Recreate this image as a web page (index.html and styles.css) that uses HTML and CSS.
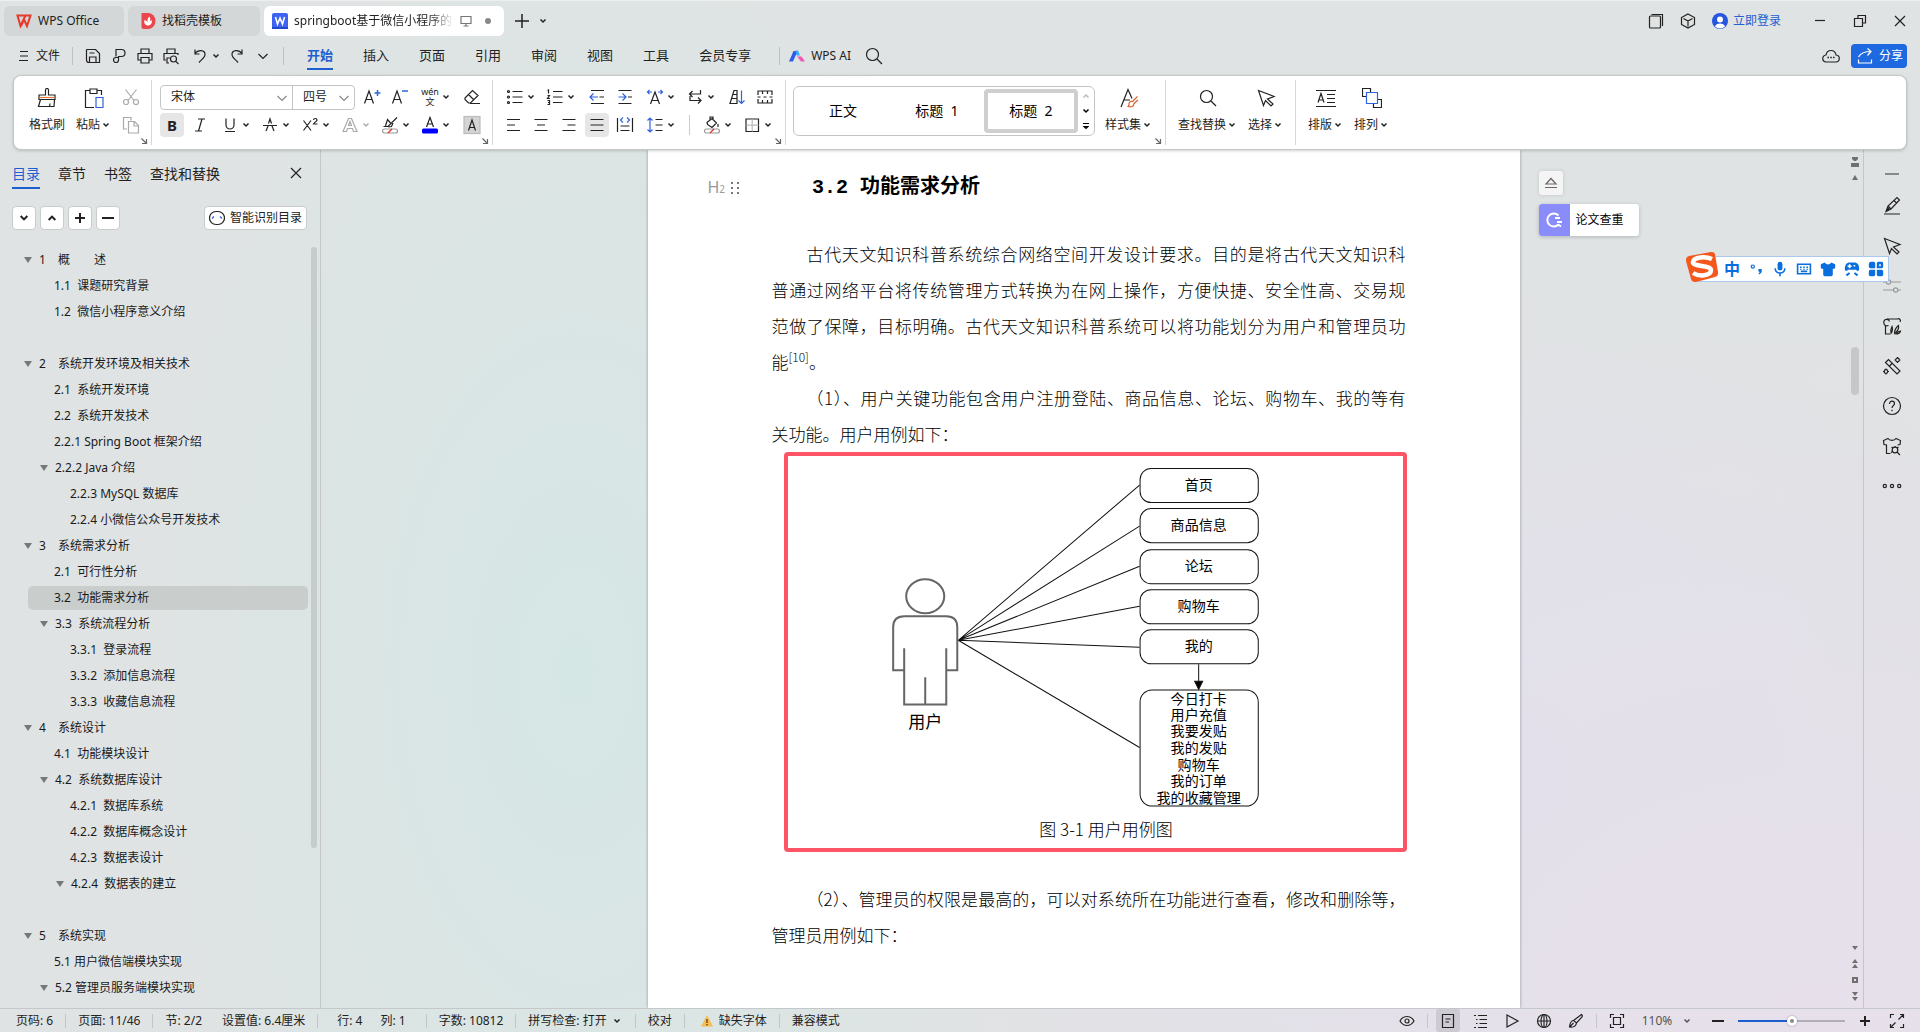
FILE: index.html
```html
<!DOCTYPE html>
<html lang="zh-CN">
<head>
<meta charset="utf-8">
<title>WPS Office</title>
<link rel="stylesheet" href="styles.css">
</head>
<body>
<svg class="sprite" aria-hidden="true">
  <symbol id="chev" viewBox="0 0 12 12"><path d="M3.500 4.500 6 7l2.500-2.500" stroke-width="1.500"/></symbol>
  <symbol id="chev-thin" viewBox="0 0 12 12"><path d="M1.500 4 6 8.500 10.500 4"/></symbol>
  <symbol id="launch" viewBox="0 0 8 8"><path d="M1.500 1.500l5 5M6.500 2v4.500H2"/></symbol>
  <symbol id="close" viewBox="0 0 20 20"><path d="M5 5l10 10M15 5 5 15"/></symbol>
  <symbol id="plus" viewBox="0 0 20 20"><path d="M10 3v14M3 10h14" stroke-width="1.500"/></symbol>
  <symbol id="plus-b" viewBox="0 0 20 20"><path d="M10 5v10M5 10h10" stroke-width="2"/></symbol>
  <symbol id="minus-b" viewBox="0 0 20 20"><path d="M4 10h12" stroke-width="2"/></symbol>
  <symbol id="search" viewBox="0 0 20 20"><circle cx="8.500" cy="8.500" r="6"/><path d="M13 13l5 5"/></symbol>
  <symbol id="cursor" viewBox="0 0 20 20"><path d="M2.500 2.500l15.500 6-6.500 2.500 5.500 5-2 2-5.500-5.500-2 5z"/></symbol>
  <symbol id="save" viewBox="0 0 20 20"><path d="M4 3.500h8.500l4 4v9H6a2.500 2.500 0 0 1-2.500-2.500V4zM6.500 16.500V11H13v5.500M6.500 7h5"/></symbol>
  <symbol id="export" viewBox="0 0 20 20"><path d="M7 10.500V3.500h5.500a3.500 3.500 0 0 1 0 7H9.500v3.500a2.500 2.500 0 1 1-2.500-2.500h3"/></symbol>
  <symbol id="print" viewBox="0 0 20 20"><path d="M6 7V3h8v4M6 14H3V7.500h14V14h-3M6 11.500h8V17H6z"/></symbol>
  <symbol id="preview" viewBox="0 0 20 20"><path d="M6 7V3h8v4M5 14H3V7.500h14V9M8 17H6v-5h3"/><circle cx="12.500" cy="13" r="3"/><path d="M14.800 15.300l2.700 2.700"/></symbol>
  <symbol id="undo" viewBox="0 0 20 20"><path d="M5 3.500V8h4.500M5 7.500c3-4 10-4 10 1 0 3-3.500 5-6 8"/></symbol>
  <symbol id="redo" viewBox="0 0 20 20"><path d="M15 3.500V8h-4.500M15 7.500c-3-4-10-4-10 1 0 3 3.500 5 6 8"/></symbol>
  <symbol id="brush" viewBox="0 0 20 20"><path d="M8.500 7V2a1.500 1.500 0 0 1 3 0v5H18v4.500H2V7zM3.500 11.500 1.500 18.500h15.500l.5-7M12.500 18.500l.5-3"/><path d="M2.500 9.500h15" stroke="#e07a3a"/></symbol>
  <symbol id="paste" viewBox="0 0 20 20"><path d="M6 2.500H1.500v17H10M13 2.500h4.500V7M6 1h7v4.500H6z"/><path d="M12 9.500h7v10h-7z" stroke="#2f63dd"/></symbol>
  <symbol id="cut" viewBox="0 0 20 20"><path d="M4.500 2.500l8.500 11M15.500 2.500 7 13.500"/><circle cx="5" cy="15" r="2.500"/><circle cx="15" cy="15" r="2.500"/></symbol>
  <symbol id="copy" viewBox="0 0 20 20"><path d="M6 14H2.500V2.500h7.500v3M7.500 6.500h6l4 4v7.500h-10zM13 7v4h4"/></symbol>
  <symbol id="a-up" viewBox="0 0 20 20"><path d="M2.500 16.500 7 4l4.500 12.500M4 12.500h6"/><path d="M12.500 6h6M15.500 3v6" stroke="#2f63dd" stroke-width="1.500"/></symbol>
  <symbol id="a-down" viewBox="0 0 20 20"><path d="M2.500 16.500 7 4l4.500 12.500M4 12.500h6"/><path d="M12 4h6" stroke="#2f63dd" stroke-width="1.500"/></symbol>
  <symbol id="eraser" viewBox="0 0 20 20"><path d="M3 11 10.500 3.500l5.500 5-7.500 7.500H6.500L3 12.500zM6.500 7.500l5.500 5.500M8 16.500h10"/></symbol>
  <symbol id="italic" viewBox="0 0 20 20"><path d="M8 4h7M5 16h7M12 4 8.500 16"/></symbol>
  <symbol id="under" viewBox="0 0 20 20"><path d="M6 3.500V10a4 4 0 0 0 8 0V3.500M5 16.500h10"/></symbol>
  <symbol id="strike" viewBox="0 0 20 20"><path d="M6 16 8 11M14 16l-2-5M8.500 8.500 10 4l1.500 4.500M3 10.500h14"/></symbol>
  <symbol id="super" viewBox="0 0 20 20"><path d="M3.500 5.500l7.500 10M11 5.500l-7.500 10M13.500 5c.3-2 3.500-2 3.500 0 0 1.500-2.500 2-3.500 4H17.500"/></symbol>
  <symbol id="a-out" viewBox="0 0 20 20"><path d="M3 16.500 8.500 3.500h3L17 16.500h-3.500l-1-3h-5l-1 3zM8.500 10.500h3L10 6.500z"/></symbol>
  <symbol id="hilite" viewBox="0 0 20 20"><path d="M3.500 11.500h4.500L17 2.500M5.500 11l2-6.500 3 3.500M8.500 12l3-.5L13 8"/><rect x="2.500" y="14" width="15" height="4" rx="2" stroke="#999"/><path d="M8 18l4-4" stroke="#d33"/></symbol>
  <symbol id="a-color" viewBox="0 0 20 20"><path d="M6.500 12 10 2.500 13.500 12M7.500 9h5"/><rect x="2" y="13.500" width="16" height="5" rx="1.500" fill="#00f" stroke="none"/></symbol>
  <symbol id="a-box" viewBox="0 0 20 20"><rect x="2" y="1.500" width="16" height="17" fill="#d4d4d4" stroke="#bbb"/><path d="M6.500 15.500 10 5l3.500 10.500M7.500 12.500h5"/></symbol>
  <symbol id="bullets" viewBox="0 0 20 20"><path d="M7.500 4.500h10M7.500 10h10M7.500 15.500h10"/><circle cx="3.500" cy="4.500" r="1"/><circle cx="3.500" cy="10" r="1"/><circle cx="3.500" cy="15.500" r="1"/></symbol>
  <symbol id="numbers" viewBox="0 0 20 20"><path d="M8 4.500h9.500M8 10h9.500M8 15.500h9.500M2.500 3.500l1-.5v3.500M2.500 8.500h2l-2 3h2.500M2.500 13.500h2v4h-2M3 15.500h1.500"/></symbol>
  <symbol id="outdent" viewBox="0 0 20 20"><path d="M4 3.500h13M12.500 10H17M4 16.500h13"/><path d="M11 10H3.500M6.500 6.500 3 10l3.500 3.500" stroke="#2f63dd"/></symbol>
  <symbol id="indent" viewBox="0 0 20 20"><path d="M3.500 3.500h13M13 10h4M3.500 16.500h13"/><path d="M3.500 10H11M7.500 6.500 11 10l-3.500 3.500" stroke="#2f63dd"/></symbol>
  <symbol id="a-wide" viewBox="0 0 20 20"><path d="M5.500 17 10 5l4.500 12M7 13.500h6"/><path d="M2.500 5H7M4.500 3l-2 2 2 2M13 5h4.500M15.500 3l2 2-2 2" stroke="#2f63dd"/></symbol>
  <symbol id="flow" viewBox="0 0 20 20"><path d="M15.500 3v4H4.500M7.500 4l-3 3 3 3M5 9v4.500h11M13 10.500l3 3-3 3"/></symbol>
  <symbol id="sort" viewBox="0 0 20 20"><path d="M3 16.500 7 3.500h3v13zM4.500 11.500H10M5.500 7.500H10"/><path d="M14.500 3.500v13M11.500 13.500l3 3 3-3" stroke="#2f63dd"/></symbol>
  <symbol id="frames" viewBox="0 0 20 20"><path d="M3 8V4h14v4M3 12v4h14v-4M7.500 4v3M12.500 4v3M7.500 13v3M12.500 13v3M2.500 10h3M8.500 10h3M14.500 10h3"/></symbol>
  <symbol id="al" viewBox="0 0 20 20"><path d="M4 4.500h13M4 10h8M4 15.500h13"/></symbol>
  <symbol id="ac" viewBox="0 0 20 20"><path d="M3.500 4.500h13M6 10h8M3.500 15.500h13"/></symbol>
  <symbol id="ar" viewBox="0 0 20 20"><path d="M3.500 4.500h13M8.500 10h8M3.500 15.500h13"/></symbol>
  <symbol id="aj" viewBox="0 0 20 20"><path d="M3.500 4.500h13M3.500 10h13M3.500 15.500h13"/></symbol>
  <symbol id="ad" viewBox="0 0 20 20"><path d="M2.500 3v14M17.500 3v14M5.500 11h9M5.500 15.500h9"/><path d="M8 2.500 5.500 5 8 7.500M12 2.500 14.500 5 12 7.500" stroke="#2f63dd"/></symbol>
  <symbol id="spacing" viewBox="0 0 20 20"><path d="M10.500 4.500h7M10.500 10h7M10.500 15.500h7"/><path d="M5 3v14M2.500 5.500 5 3l2.500 2.500M2.500 14.500 5 17l2.500-2.500" stroke="#2f63dd"/></symbol>
  <symbol id="bucket" viewBox="0 0 20 20"><path d="M5 7.500 10 3.500l4.500 4.500-4.500 4.500-4.500-3zM8 5V2h3v3M16 9v3"/><rect x="2.500" y="14" width="15" height="4" rx="2" stroke="#999"/><path d="M8 18l4-4" stroke="#d33"/></symbol>
  <symbol id="borders" viewBox="0 0 20 20"><path d="M4 4h12.500v12.500H4z"/><path d="M10.200 4.500v12M4.500 10.200h12" stroke="#bbb"/></symbol>
  <symbol id="styles" viewBox="0 0 20 20"><path d="M2 19 9 1.500l4 9M5 12h6"/><path d="M18.500 8.500l-5 5M19 12l-4.500 4M13.500 13.500c-2.500-.5-4 1-3.500 3.500l-1 1.500c3 1 6 0 6-3" stroke="#d8622b"/></symbol>
  <symbol id="typeset" viewBox="0 0 20 20"><path d="M0 2.500h20M0 18.500h20M2 14.500 5 5.500l3 9M3 12h4M11 6.500h8M11 10.500h8M11 14.500h8"/></symbol>
  <symbol id="arrange" viewBox="0 0 20 20"><path d="M5 8.500H.5v-8h8V4M11.500 15v4.500h8v-8H16"/><path d="M4.500 4.500h11v11h-11z" stroke="#2f63dd" fill="#fff"/></symbol>
  <symbol id="windows" viewBox="0 0 20 20"><rect x="3.500" y="5" width="11" height="12" rx="1"/><path d="M5.500 3.500h11v11.500"/></symbol>
  <symbol id="cube" viewBox="0 0 20 20"><path d="M10 3l6.500 3.500v7L10 17l-6.500-3.500v-7zM5.500 7.500 10 10l4.500-2.500M10 10v5.500"/></symbol>
  <symbol id="restore" viewBox="0 0 20 20"><path d="M4.500 7.500h8v8h-8zM8 7V4.500h7.500V12H13"/></symbol>
  <symbol id="cloud" viewBox="0 0 20 20"><path d="M5.500 16a3.500 3.500 0 0 1-.5-7c1-6 9-6 10 0a3.500 3.500 0 0 1-.5 7z"/><path d="M6.500 11.500H8M9.300 11.500h1.500M12 11.500h1.500" stroke-width="1.700"/></symbol>
  <symbol id="share" viewBox="0 0 20 20"><path d="M3.500 11c2-4 6-5.500 12.500-5.500M12.500 2.500 16 5.500l-3.500 4M3.500 13.500V17h13v-3.500"/></symbol>
  <symbol id="eye" viewBox="0 0 20 20"><path d="M3 10c3.500-6 10.500-6 14 0-3.500 6-10.500 6-14 0z"/><circle cx="10" cy="10" r="2"/></symbol>
  <symbol id="doc" viewBox="0 0 20 20"><path d="M4.500 3.500h11v13h-11zM7.500 8h5M7.500 11h3.500"/></symbol>
  <symbol id="outline" viewBox="0 0 20 20"><path d="M4 4.500h2M8 4.500h9M6 8.500h1.500M9.500 8.500H17M6 12.500h1.500M9.500 12.500H17M4 16.500h2M8 16.500h9"/></symbol>
  <symbol id="play" viewBox="0 0 20 20"><path d="M5 4l11 6-11 6z"/></symbol>
  <symbol id="globe" viewBox="0 0 20 20"><circle cx="10" cy="10" r="6.500"/><ellipse cx="10" cy="10" rx="3" ry="6.500"/><path d="M3.500 10h13M10 3.500v13"/></symbol>
  <symbol id="pen" viewBox="0 0 20 20"><path d="M15.500 3.500c1 .7 1 1.500.5 2.500l-5.500 6-3-2.500zM7 9.500c-2 .5-3 2-3.500 6.500 4 .5 6.500-1 7-4M3.500 16l4-4"/></symbol>
  <symbol id="focus" viewBox="0 0 20 20"><path d="M3.500 7V3.500H7M13 3.500h3.500V7M16.500 13v3.500H13M7 16.500H3.500V13M6.500 6.500h7v7h-7z"/></symbol>
  <symbol id="expand" viewBox="0 0 20 20"><path d="M3.500 7V3.500H7M16.500 13v3.500H13M7 16.500H3.500V13M13 3.500h3.500V7M11.500 8.500l4.500-4.500M8.500 11.500 4 16"/></symbol>
  <symbol id="edit" viewBox="0 0 20 20"><path d="M4 15.500 6 10l9-8.500 2.500 2.500L9 13zM6 10l3 3M12 4.500 14.500 7M4 15.500l4-4.500M2 18h16"/></symbol>
  <symbol id="sliders" viewBox="0 0 20 20"><path d="M1 6h4M8.500 6H19M1 14h10.500M16 14h3"/><circle cx="6.500" cy="6" r="2.200"/><circle cx="13.700" cy="14" r="2.200"/></symbol>
  <symbol id="gallery" viewBox="0 0 20 20"><path d="M5 3h10.500a2 2 0 0 1 2.500 3M3.500 9V18H8M6.500 9.500C3 11 1 8 2 5c1-2.500 5-2 5.500.5"/><path d="M9 17.500c-1-3 0-5 1-7 1 3 .5 5-1 7zM12.500 17.500c0-4 1.500-6 4-8 .5 3-1 6-4 8zM14 18c1.500-2 3-3 4.500-3-.5 2-1.500 3-4.500 3z"/></symbol>
  <symbol id="wand" viewBox="0 0 20 20"><path d="M3.500 6.500l3-3L18 15l-3 3zM7.500 10l2.500-2.500"/><circle cx="15.500" cy="4" r="1.800"/><circle cx="4" cy="15.500" r="1.800"/><path d="M15.500 1v1.200M15.500 5.800V7M12.500 4h1.200M17.300 4h1.200M4 12.500v1.200M4 17.300v1.200M1 15.500h1.200M5.800 15.500H7"/></symbol>
  <symbol id="help" viewBox="0 0 20 20"><circle cx="10" cy="10" r="8.500"/><path d="M7.500 8c0-4 5-3.500 5-.5 0 2-2.500 2-2.500 4.500M10 13.800v1.500"/></symbol>
  <symbol id="shirt-search" viewBox="0 0 20 20"><path d="M8.500 17.500h-4V9L2 8.500 1.500 4.500 6 2.500c1.500 2.500 6.500 2.500 8 0l4.500 2-.5 4-2.500.5"/><circle cx="13" cy="14" r="2.800"/><path d="M15 16l3 3M13 10v1M9.500 11l1.500 1M9 16.500l1.500-1M16.500 11 15 12"/></symbol>
  <symbol id="dots3" viewBox="0 0 20 20"><circle cx="2.800" cy="10" r="1.600"/><circle cx="10" cy="10" r="1.600"/><circle cx="17.200" cy="10" r="1.600"/></symbol>
  <symbol id="eject" viewBox="0 0 20 20"><path d="M4 14.500h12M5 11l5-5.500L15 11z"/></symbol>
</svg>

<header class="titlebar">
  <button class="tab tab-home"><svg class="i16" viewBox="0 0 16 16"><path d="M1.500 2.500h8L4.500 13z M6.500 2.500h8L11 13 8 6.500 5 13" stroke="#e8392a" stroke-width="2"/></svg>WPS Office</button>
  <button class="tab tab-store"><svg class="i16" viewBox="0 0 16 16"><path d="M1.500 0H8a7.500 8 0 0 1 0 16H3.500a2 2 0 0 1-2-2z" fill="#e9474c" stroke="none"/><path d="M8 12.500C4 12 4 9 4.500 7c1.500.5 2.500 1 3 2.500C7 7 8 4.500 9.500 3.500c1 1.500 1 3.500 0 5 .5-.7 1.500-1 2.500-1C12 10 11 12.500 8 12.500z" fill="#fff" stroke="none"/></svg>找稻壳模板</button>
  <div class="tab tab-doc"><svg class="i16" viewBox="0 0 16 16"><rect width="16" height="16" rx="2" fill="#3c63f2" stroke="none"/><path d="M0 14h16v2H0z" fill="#2348c8" stroke="none"/><path d="M3.500 4l2 7L8 5l2.500 6 2-7" stroke="#fff" stroke-width="1.600"/></svg><span class="doc-name">springboot基于微信小程序的</span><svg class="i12 dim" viewBox="0 0 12 12"><path d="M1 1.500h10v7H1zM3.500 11h5M6 8.500V11"/></svg><span class="unsaved"></span></div>
  <button class="plain" aria-label="新建"><svg class="i20"><use href="#plus"/></svg></button>
  <button class="plain narrow" aria-label="标签列表"><svg class="i12"><use href="#chev"/></svg></button>
  <div class="window-tools">
    <button class="plain" aria-label="窗口"><svg class="i20"><use href="#windows"/></svg></button>
    <button class="plain" aria-label="应用"><svg class="i20"><use href="#cube"/></svg></button>
    <button class="login"><svg class="i16" viewBox="0 0 16 16"><circle cx="8" cy="8" r="8" fill="#2456e0" stroke="none"/><circle cx="8" cy="6.500" r="3" fill="#fff" stroke="none"/><path d="M3 13.500c1-4 9-4 10 0-3 2.500-7 2.500-10 0z" fill="#fff" stroke="none"/></svg>立即登录</button>
    <button class="win" aria-label="最小化"><svg class="i20" viewBox="0 0 20 20"><path d="M5 9.500h10"/></svg></button>
    <button class="win" aria-label="还原"><svg class="i20"><use href="#restore"/></svg></button>
    <button class="win" aria-label="关闭"><svg class="i20"><use href="#close"/></svg></button>
  </div>
</header>

<nav class="menubar">
  <button class="file"><svg class="i12" viewBox="0 0 12 12"><path d="M2 1.500h8M2 6h8M1 10.500h9"/></svg>文件</button>
  <span class="vsep"></span>
  <button class="quick" aria-label="保存"><svg class="i20"><use href="#save"/></svg></button>
  <button class="quick" aria-label="输出"><svg class="i20"><use href="#export"/></svg></button>
  <button class="quick" aria-label="打印"><svg class="i20"><use href="#print"/></svg></button>
  <button class="quick" aria-label="预览"><svg class="i20"><use href="#preview"/></svg></button>
  <button class="tb dd" aria-label="撤销"><svg class="i20"><use href="#undo"/></svg><svg class="i12"><use href="#chev"/></svg></button>
  <button class="quick" aria-label="恢复"><svg class="i20"><use href="#redo"/></svg></button>
  <button class="quick" aria-label="更多"><svg class="i12"><use href="#chev-thin"/></svg></button>
  <span class="vsep"></span>
  <div class="menu-tabs">
    <a href="#" class="on">开始</a><a href="#">插入</a><a href="#">页面</a><a href="#">引用</a><a href="#">审阅</a><a href="#">视图</a><a href="#">工具</a><a href="#">会员专享</a>
  </div>
  <span class="vsep"></span>
  <button class="ai"><svg class="i16" viewBox="0 0 16 16"><path d="M0 13.500 4.500 3h4L4 13.500z" fill="#2f5bea" stroke="none"/><path d="M6.500 2.500h2.500l2 5H7.500z" fill="#35a8ff" stroke="none"/><path d="M8 8.500h4.500L16 13.500h-4z" fill="#f357b5" stroke="none"/></svg>WPS AI</button>
  <button class="quick" aria-label="搜索"><svg class="i20"><use href="#search"/></svg></button>
  <div class="menu-right">
    <button class="plain" aria-label="云"><svg class="i20"><use href="#cloud"/></svg></button>
    <button class="share"><svg class="i20"><use href="#share"/></svg>分享</button>
  </div>
</nav>

<section class="ribbon">
  <div class="group g-clip">
    <button class="big w48"><svg class="i20"><use href="#brush"/></svg><span>格式刷</span></button>
    <button class="big w46"><svg class="i20"><use href="#paste"/></svg><span>粘贴<svg class="i12"><use href="#chev"/></svg></span></button>
    <div class="rows off">
      <button class="tb" aria-label="剪切"><svg class="i20"><use href="#cut"/></svg></button>
      <button class="tb" aria-label="复制"><svg class="i20"><use href="#copy"/></svg></button>
    </div>
    <svg class="launcher"><use href="#launch"/></svg>
  </div>
  <div class="group">
    <div class="rows">
      <div class="row">
        <div class="fontbox">
          <label class="pick pick-font"><select aria-label="字体"><option>宋体</option></select><svg class="i12"><use href="#chev-thin"/></svg></label>
          <label class="pick pick-size"><select aria-label="字号"><option>四号</option></select><svg class="i12"><use href="#chev-thin"/></svg></label>
        </div>
        <button class="tb" aria-label="增大字号"><svg class="i20"><use href="#a-up"/></svg></button>
        <button class="tb" aria-label="减小字号"><svg class="i20"><use href="#a-down"/></svg></button>
        <button class="tb dd"><span class="pinyin"><span>wén</span><span>文</span></span><svg class="i12"><use href="#chev"/></svg></button>
        <button class="tb" aria-label="清除格式"><svg class="i20"><use href="#eraser"/></svg></button>
      </div>
      <div class="row">
        <button class="tb"><b class="bold">B</b></button>
        <button class="tb" aria-label="斜体"><svg class="i20"><use href="#italic"/></svg></button>
        <button class="tb dd" aria-label="下划线"><svg class="i20"><use href="#under"/></svg><svg class="i12"><use href="#chev"/></svg></button>
        <button class="tb dd" aria-label="删除线"><svg class="i20"><use href="#strike"/></svg><svg class="i12"><use href="#chev"/></svg></button>
        <button class="tb dd" aria-label="上标"><svg class="i20"><use href="#super"/></svg><svg class="i12"><use href="#chev"/></svg></button>
        <button class="tb dd faded" aria-label="文字效果"><svg class="i20"><use href="#a-out"/></svg><svg class="i12"><use href="#chev"/></svg></button>
        <button class="tb dd" aria-label="突出显示"><svg class="i20"><use href="#hilite"/></svg><svg class="i12"><use href="#chev"/></svg></button>
        <button class="tb dd" aria-label="字体颜色"><svg class="i20"><use href="#a-color"/></svg><svg class="i12"><use href="#chev"/></svg></button>
        <button class="tb" aria-label="字符底纹"><svg class="i20"><use href="#a-box"/></svg></button>
      </div>
    </div>
    <svg class="launcher"><use href="#launch"/></svg>
  </div>
  <div class="group">
    <div class="rows">
      <div class="row">
        <button class="tb dd" aria-label="项目符号"><svg class="i20"><use href="#bullets"/></svg><svg class="i12"><use href="#chev"/></svg></button>
        <button class="tb dd" aria-label="编号"><svg class="i20"><use href="#numbers"/></svg><svg class="i12"><use href="#chev"/></svg></button>
        <button class="tb" aria-label="减少缩进"><svg class="i20"><use href="#outdent"/></svg></button>
        <button class="tb" aria-label="增加缩进"><svg class="i20"><use href="#indent"/></svg></button>
        <button class="tb dd" aria-label="字符缩放"><svg class="i20"><use href="#a-wide"/></svg><svg class="i12"><use href="#chev"/></svg></button>
        <button class="tb dd" aria-label="文字方向"><svg class="i20"><use href="#flow"/></svg><svg class="i12"><use href="#chev"/></svg></button>
        <button class="tb" aria-label="排序"><svg class="i20"><use href="#sort"/></svg></button>
        <button class="tb" aria-label="显示标记"><svg class="i20"><use href="#frames"/></svg></button>
      </div>
      <div class="row">
        <button class="tb" aria-label="左对齐"><svg class="i20"><use href="#al"/></svg></button>
        <button class="tb" aria-label="居中"><svg class="i20"><use href="#ac"/></svg></button>
        <button class="tb" aria-label="右对齐"><svg class="i20"><use href="#ar"/></svg></button>
        <button class="tb" aria-label="两端对齐"><svg class="i20 pressed"><use href="#aj"/></svg></button>
        <button class="tb" aria-label="分散对齐"><svg class="i20"><use href="#ad"/></svg></button>
        <button class="tb dd" aria-label="行距"><svg class="i20"><use href="#spacing"/></svg><svg class="i12"><use href="#chev"/></svg></button>
        <span class="row-sep"></span>
        <button class="tb dd" aria-label="底纹"><svg class="i20"><use href="#bucket"/></svg><svg class="i12"><use href="#chev"/></svg></button>
        <button class="tb dd" aria-label="边框"><svg class="i20"><use href="#borders"/></svg><svg class="i12"><use href="#chev"/></svg></button>
      </div>
    </div>
    <svg class="launcher"><use href="#launch"/></svg>
  </div>
  <div class="group roomy">
    <div class="gallery">
      <button>正文</button><button>标题&nbsp; 1</button><button class="sel">标题&nbsp; 2</button>
      <div class="gallery-nav">
        <svg class="i12 flip"><use href="#chev"/></svg>
        <svg class="i12"><use href="#chev"/></svg>
        <svg class="i12" viewBox="0 0 12 12"><path d="M3 3.500h6M4 6.500l2 2 2-2z"/></svg>
      </div>
    </div>
    <button class="big w60"><svg class="i20"><use href="#styles"/></svg><span>样式集<svg class="i12"><use href="#chev"/></svg></span></button>
    <svg class="launcher"><use href="#launch"/></svg>
  </div>
  <div class="group roomy">
    <button class="big w70"><svg class="i20"><use href="#search"/></svg><span>查找替换<svg class="i12"><use href="#chev"/></svg></span></button>
    <button class="big w46"><svg class="i20"><use href="#cursor"/></svg><span>选择<svg class="i12"><use href="#chev"/></svg></span></button>
  </div>
  <div class="group roomy">
    <button class="big w46"><svg class="i20"><use href="#typeset"/></svg><span>排版<svg class="i12"><use href="#chev"/></svg></span></button>
    <button class="big w46"><svg class="i20"><use href="#arrange"/></svg><span>排列<svg class="i12"><use href="#chev"/></svg></span></button>
  </div>
</section>

<main class="work">
  <aside class="sidebar">
    <div class="side-tabs">
      <a href="#" class="on">目录</a><a href="#">章节</a><a href="#">书签</a><a href="#">查找和替换</a>
      <button class="plain" aria-label="关闭"><svg class="i20"><use href="#close"/></svg></button>
    </div>
    <div class="side-tools">
      <button class="chip" aria-label="展开"><svg class="i16"><use href="#chev"/></svg></button>
      <button class="chip" aria-label="收起"><svg class="i16 flip"><use href="#chev"/></svg></button>
      <button class="chip" aria-label="增加"><svg class="i20"><use href="#plus-b"/></svg></button>
      <button class="chip" aria-label="减少"><svg class="i20"><use href="#minus-b"/></svg></button>
      <button class="chip smart"><svg class="i16" viewBox="0 0 16 16"><rect x=".5" y="1.500" width="15" height="13" rx="6.500"/><path d="M3 8.500l2-2M13 8.500l-2-2" stroke="#2f63dd"/></svg>智能识别目录</button>
    </div>
    <div class="tree-wrap">
      <ul class="tree">
        <li><a href="#" class="l1 open"><span>1</span>概　　述</a></li>
        <li><a href="#" class="l2">1.1&nbsp; 课题研究背景</a></li>
        <li><a href="#" class="l2">1.2&nbsp; 微信小程序意义介绍</a></li>
        <li></li>
        <li><a href="#" class="l1 open"><span>2</span>系统开发环境及相关技术</a></li>
        <li><a href="#" class="l2">2.1&nbsp; 系统开发环境</a></li>
        <li><a href="#" class="l2">2.2&nbsp; 系统开发技术</a></li>
        <li><a href="#" class="l2">2.2.1 Spring Boot 框架介绍</a></li>
        <li><a href="#" class="l2 open">2.2.2 Java 介绍</a></li>
        <li><a href="#" class="l3">2.2.3 MySQL 数据库</a></li>
        <li><a href="#" class="l3">2.2.4 小微信公众号开发技术</a></li>
        <li><a href="#" class="l1 open"><span>3</span>系统需求分析</a></li>
        <li><a href="#" class="l2">2.1&nbsp; 可行性分析</a></li>
        <li><a href="#" class="l2 current">3.2&nbsp; 功能需求分析</a></li>
        <li><a href="#" class="l2 open">3.3&nbsp; 系统流程分析</a></li>
        <li><a href="#" class="l3">3.3.1&nbsp; 登录流程</a></li>
        <li><a href="#" class="l3">3.3.2&nbsp; 添加信息流程</a></li>
        <li><a href="#" class="l3">3.3.3&nbsp; 收藏信息流程</a></li>
        <li><a href="#" class="l1 open"><span>4</span>系统设计</a></li>
        <li><a href="#" class="l2">4.1&nbsp; 功能模块设计</a></li>
        <li><a href="#" class="l2 open">4.2&nbsp; 系统数据库设计</a></li>
        <li><a href="#" class="l3">4.2.1&nbsp; 数据库系统</a></li>
        <li><a href="#" class="l3">4.2.2&nbsp; 数据库概念设计</a></li>
        <li><a href="#" class="l3">4.2.3&nbsp; 数据表设计</a></li>
        <li><a href="#" class="l3 open">4.2.4&nbsp; 数据表的建立</a></li>
        <li></li>
        <li><a href="#" class="l1 open"><span>5</span>系统实现</a></li>
        <li><a href="#" class="l2">5.1 用户微信端模块实现</a></li>
        <li><a href="#" class="l2 open">5.2 管理员服务端模块实现</a></li>
      </ul>
      <div class="tree-bar"><span></span></div>
    </div>
  </aside>

  <div class="canvas">
    <article class="page">
      <div class="heading">
        <span class="mark">H<small>2</small></span>
        <svg class="grip" viewBox="0 0 10 14"><path d="M1 1h2v2H1zM7 1h2v2H7zM1 6h2v2H1zM7 6h2v2H7zM1 11h2v2H1zM7 11h2v2H7z"/></svg>
        <h2>3.2 功能需求分析</h2>
      </div>
      <p><span class="ln first">古代天文知识科普系统综合网络空间开发设计要求。目的是将古代天文知识科</span><span class="ln">普通过网络平台将传统管理方式转换为在网上操作，方便快捷、安全性高、交易规</span><span class="ln">范做了保障，目标明确。古代天文知识科普系统可以将功能划分为用户和管理员功</span><span class="ln last">能<sup>[10]</sup>。</span></p>
      <p><span class="ln first">（1）、用户关键功能包含用户注册登陆、商品信息、论坛、购物车、我的等有</span><span class="ln last">关功能。用户用例如下：</span></p>
      <figure>
        <svg class="usecase" viewBox="789 457 614 355">
          <g class="person"><ellipse cx="926" cy="597" rx="19" ry="17"/><path d="M905 649v56h42v-56M905 671h-11v-43q0-11 11-11h42q11 0 11 11v43h-11M926 678v27"/></g>
          <g class="links"><path d="M959 641 1140 486M959 641l181-114M959 641l181-74M959 641l181-34M959 641l181 7M959 641l181 107M1199 665v20"/><path d="M1195 682h8l-4 8z" class="head"/></g>
          <g class="nodes"><rect x="1140.500" y="469.500" width="118" height="34" rx="11"/><rect x="1140.500" y="509.500" width="118" height="34" rx="11"/><rect x="1140.500" y="550.500" width="118" height="34" rx="11"/><rect x="1140.500" y="590.500" width="118" height="34" rx="11"/><rect x="1140.500" y="630.500" width="118" height="34" rx="11"/><rect x="1140.500" y="690.500" width="118" height="116" rx="12"/></g>
          <g class="labels"><text x="1199" y="491">首页</text><text x="1199" y="531">商品信息</text><text x="1199" y="572">论坛</text><text x="1199" y="612">购物车</text><text x="1199" y="652">我的</text><text x="1199" y="705">今日打卡</text><text x="1199" y="721">用户充值</text><text x="1199" y="737">我要发贴</text><text x="1199" y="754">我的发贴</text><text x="1199" y="770">购物车</text><text x="1199" y="786">我的订单</text><text x="1199" y="803">我的收藏管理</text><text x="926" y="729" class="actor">用户</text></g>
        </svg>
        <figcaption>图 3-1 用户用例图</figcaption>
      </figure>
      <p class="after"><span class="ln first">（2）、管理员的权限是最高的，可以对系统所在功能进行查看，修改和删除等，</span><span class="ln last">管理员用例如下：</span></p>
    </article>
    <div class="page-side">
      <button class="collapse" aria-label="收起"><svg class="i20"><use href="#eject"/></svg></button>
      <button class="check"><span><svg class="i20" viewBox="0 0 20 20"><path d="M14.500 5.500a6.500 6.500 0 1 0 0 9M11 8h5M13 12h5M14 14.500l3 2" stroke="#fff" stroke-width="2"/></svg></span>论文查重</button>
    </div>
    <div class="vbar">
      <svg class="i12" viewBox="0 0 12 12"><path d="M3 1h6v2L7 5H5L3 3zM2 7h8v4H2z"/></svg>
      <svg class="i12" viewBox="0 0 12 12"><path d="M6 3l3 5H3z"/></svg>
      <span class="thumb"></span>
      <svg class="i12 push" viewBox="0 0 12 12"><path d="M6 8 3 4h6z"/></svg>
      <svg class="i12" viewBox="0 0 12 12"><path d="M6 1l3 4H3zM6 6l3 4H3z"/></svg>
      <svg class="i12" viewBox="0 0 12 12"><path d="M3 3h6v6H3zM5 5v2h2V5z" fill-rule="evenodd"/></svg>
      <svg class="i12" viewBox="0 0 12 12"><path d="M6 6 3 2h6zM6 11 3 7h6z"/></svg>
    </div>
  </div>

  <aside class="rail">
    <button class="fold" aria-label="折叠"><svg class="i20" viewBox="0 0 20 20"><path d="M3 10h14" stroke="#888" stroke-width="2"/></svg></button>
    <button aria-label="编辑"><svg class="i20"><use href="#edit"/></svg></button>
    <button aria-label="选择"><svg class="i20"><use href="#cursor"/></svg></button>
    <button class="soft" aria-label="设置"><svg class="i20"><use href="#sliders"/></svg></button>
    <button aria-label="素材"><svg class="i20"><use href="#gallery"/></svg></button>
    <button aria-label="智能"><svg class="i20"><use href="#wand"/></svg></button>
    <button aria-label="帮助"><svg class="i20"><use href="#help"/></svg></button>
    <button aria-label="皮肤"><svg class="i20"><use href="#shirt-search"/></svg></button>
    <button aria-label="更多"><svg class="i20"><use href="#dots3"/></svg></button>
  </aside>
</main>

<footer class="status">
  <span>页码: 6</span><i></i><span>页面: 11/46</span><i></i><span>节: 2/2</span><span class="near">设置值: 6.4厘米</span><i></i><span class="pad">行: 4</span><span class="pad">列: 1</span><i class="wide"></i><span>字数: 10812</span><i></i><button class="spell">拼写检查: 打开<svg class="i12"><use href="#chev"/></svg></button><i></i><span>校对</span><i></i><button class="warn"><svg class="i12" viewBox="0 0 12 12"><path d="M6 0l6 11.500H0z" fill="#f6bd4f" stroke="none"/><path d="M6 4v4M6 9v1.500" stroke="#533"/></svg>缺失字体</button><i></i><span>兼容模式</span>
  <div class="views">
    <button aria-label="护眼"><svg class="i20"><use href="#eye"/></svg></button><b></b>
    <button class="sel" aria-label="页面视图"><svg class="i20"><use href="#doc"/></svg></button>
    <button aria-label="大纲"><svg class="i20"><use href="#outline"/></svg></button>
    <button aria-label="播放"><svg class="i20"><use href="#play"/></svg></button>
    <button aria-label="网页"><svg class="i20"><use href="#globe"/></svg></button>
    <button aria-label="写作"><svg class="i20"><use href="#pen"/></svg></button><b></b>
    <button aria-label="适应"><svg class="i20"><use href="#focus"/></svg></button>
    <button class="zoom">110%<svg class="i12"><use href="#chev"/></svg></button>
    <button aria-label="缩小"><svg class="i20"><use href="#minus-b"/></svg></button>
    <input type="range" min="0" max="100" value="51" aria-label="缩放">
    <button aria-label="放大"><svg class="i20"><use href="#plus-b"/></svg></button>
    <button aria-label="全屏"><svg class="i20"><use href="#expand"/></svg></button>
  </div>
</footer>

<div class="ime">
  <svg class="ime-logo" viewBox="0 0 34 32"><path d="M4 5 26 1q3-.5 4 2l3 18q.5 4-3 5L11 31q-4 .5-5-3L1 10q-.5-4 3-5z" fill="#f4581c"/><path d="M27 8C20 5 9 6 8 11c-1 5 18 3 18 8 0 6-12 7-18 3" fill="none" stroke="#fff" stroke-width="4.500"/></svg>
  <b>中</b>
  <svg class="i20" viewBox="0 0 20 20"><circle cx="6" cy="7" r="2" fill="none" stroke="currentColor" stroke-width="1.500"/><path d="M13 10h4c1 4-1 6-3.500 7l-.5-1c1.500-1 1.500-2 1-3h-1z"/></svg>
  <svg class="i20" viewBox="0 0 20 20"><rect x="7" y="1" width="6" height="11" rx="3"/><path d="M4 9c0 8 12 8 12 0M10 15v4" fill="none" stroke="currentColor" stroke-width="2"/></svg>
  <svg class="i20" viewBox="0 0 20 20"><path d="M2 4h16v12H2z" fill="none" stroke="currentColor" stroke-width="2"/><path d="M5 7h2v2H5zM9 7h2v2H9zM13 7h2v2h-2zM5 10h2v1H5zM9 10h2v1H9zM13 10h2v1h-2zM6 12h8v2H6z"/></svg>
  <svg class="i20" viewBox="0 0 20 20"><path d="M1 4l5-2c1 3 7 3 8 0l5 2v5l-3 1v7q0 2-2 2H6q-2 0-2-2v-7L1 9z"/></svg>
  <svg class="i20" viewBox="0 0 20 20"><path fill-rule="evenodd" d="M6 2h8q5 1 5 8c0 3-3 3-4 1H5c-1 2-4 2-4-1q0-7 5-8zM6 4v1.500H4.500v2H6V9h2V7.500h1.500v-2H8V4zM12 5v2h2V5z"/><path d="M3 18l4-3M17 18l-4-3" stroke="currentColor" stroke-width="2.500"/></svg>
  <svg class="i20" viewBox="0 0 20 20"><path fill-rule="evenodd" d="M4 1h3q2 0 2 2v6H3q-2 0-2-2V4q0-3 3-3zM13 1h4q2 0 2 2v4q0 2-2 2h-6V3q0-2 2-2zm1 3v2.500h2V4zM3 11h6v6q0 2-2 2H3q-2 0-2-2v-4q0-2 2-2zM11 11h6q2 0 2 2v4q0 2-2 2h-4q-2 0-2-2z"/></svg>
</div>
</body>
</html>
```
FILE: styles.css
```css
* { box-sizing: border-box; }
html, body { height: 100%; }
body {
  margin: 0;
  display: flex;
  flex-direction: column;
  overflow: hidden;
  color: #222;
  font: 12px/18px "Noto Sans", "Noto Sans CJK SC", sans-serif;
  background:
    radial-gradient(ellipse 24% 80% at 30% 65%, #d5e7e5 0, rgba(213, 231, 229, 0) 100%),
    radial-gradient(ellipse 50% 70% at 95% 100%, #e7e0eb 0, rgba(231, 224, 235, 0) 100%),
    radial-gradient(ellipse 30% 50% at 78% 75%, #e0e0ec 0, rgba(224, 224, 236, 0) 100%),
    #e0e3e3;
}
button, select, input { font: inherit; color: inherit; margin: 0; }
button { border: 0; padding: 0; background: none; display: flex; align-items: center; justify-content: center; white-space: nowrap; }
a { color: inherit; text-decoration: none; white-space: nowrap; }
svg { fill: none; stroke: currentColor; stroke-width: 1.2; flex: none; display: block; }
.sprite { position: absolute; width: 0; height: 0; }
.i12 { width: 12px; height: 12px; }
.i16 { width: 16px; height: 16px; }
.i20 { width: 20px; height: 20px; }
.flip { transform: rotate(180deg); }

/* Title bar */
.titlebar { display: flex; align-items: center; height: 40px; padding: 2px 0 0 4px; flex: none; box-shadow: inset 0 1px #eef0f0; }
.tab { display: flex; align-items: center; justify-content: flex-start; height: 30px; margin-right: 4px; padding: 0 12px; gap: 6px; border-radius: 6px; background: #d4d7d7; }
.tab-home { width: 120px; }
.tab-store { width: 132px; }
.tab-doc { width: 240px; padding: 0 8px; background: #fff; }
.doc-name { width: 160px; overflow: hidden; white-space: nowrap; mask-image: linear-gradient(90deg, #000 85%, transparent); }
.dim { color: #777; }
.unsaved { width: 6px; height: 6px; margin-left: 7px; border-radius: 50%; background: #888; }
.plain { width: 28px; height: 24px; }
.narrow { width: 14px; }
.window-tools { display: flex; align-items: center; margin-left: auto; }
.window-tools .plain { width: 32px; }
.login { gap: 5px; margin: 0 19px 0 8px; color: #2360d0; }
.win { width: 40px; height: 30px; }

/* Menu bar */
.menubar { display: flex; align-items: center; height: 31px; flex: none; padding: 0 13px 0 18px; }
.file { gap: 6px; }
.vsep { width: 1px; height: 18px; background: #bfc2c2; margin: 0 7px 0 12px; }
.quick { width: 26px; height: 26px; }
.quick + .vsep { margin: 0 23px 0 7px; }
.menu-tabs { display: flex; gap: 30px; font-size: 13px; }
.menu-tabs a { height: 28px; line-height: 26px; border-bottom: 2px solid transparent; }
.menu-tabs .on { color: #1e5fd0; font-weight: 700; border-color: #1e5fd0; }
.menu-tabs + .vsep { margin: 0 9px 0 28px; }
.ai { gap: 6px; margin-right: 10px; }
.menu-right { display: flex; align-items: center; gap: 6px; margin-left: auto; }
.share { width: 56px; height: 24px; gap: 4px; border-radius: 4px; color: #fff; background: #1f69e0; }

/* Ribbon */
.ribbon { display: flex; flex: none; height: 75px; margin: 4px 13px 0; background: #fff; border: 1px solid #c6c8c8; border-radius: 8px; box-shadow: 0 1px 3px rgba(0, 0, 0, .18); position: relative; z-index: 2; }
.group { position: relative; display: flex; align-items: center; padding: 0 6px 3px; margin: 4px 0; border-right: 1px solid #d6d6d6; }
.group:last-child { border-right: 0; }
.g-clip { padding-left: 9px; }
.roomy { padding-left: 7px; }
.launcher { position: absolute; right: 3px; bottom: 0; width: 8px; height: 8px; color: #666; }
.big { flex-direction: column; height: 56px; gap: 8px; }
.big span { display: flex; align-items: center; }
.w46 { width: 46px; }
.w48 { width: 48px; }
.w60 { width: 60px; }
.w70 { width: 70px; }
.rows { display: flex; flex-direction: column; gap: 4px; }
.row { display: flex; align-items: center; height: 24px; }
.tb { width: 28px; height: 24px; }
.dd { width: 40px; justify-content: flex-start; padding-left: 6px; }
.dd + .tb:not(.dd) { margin-left: 4px; }
.off { color: #aaa; }
.faded { color: #aaa; }
.row-sep { width: 1px; height: 20px; margin: 0 6px 0 10px; background: #ccc; }
.pressed { background: #e6e6e6; outline: 2px solid #e6e6e6; border-radius: 2px; }
.bold { width: 24px; line-height: 24px; font-size: 15px; border-radius: 4px; background: #e6e6e6; }
.pinyin { display: flex; flex-direction: column; width: 20px; font-size: 9px; line-height: 10px; text-align: center; }
.fontbox { display: flex; width: 195px; height: 25px; margin: 0 5px 0 2px; border: 1px solid #c4c4c4; border-radius: 4px; }
.fontbox + .tb { margin-left: -2px; }
.pick { position: relative; flex: 1; }
.pick-size { flex: 0 0 62px; border-left: 1px solid #c4c4c4; }
.pick select { appearance: none; width: 100%; height: 100%; border: 0; background: none; padding: 0 10px; }
.pick svg { position: absolute; right: 4px; top: 6px; color: #888; }
.gallery { display: flex; width: 302px; height: 50px; margin-right: 4px; padding: 2px 0 2px 2px; border: 1px solid #c4c4c4; border-radius: 6px; font-size: 14px; color: #000; }
.gallery button { width: 94px; border-radius: 4px; }
.gallery .sel { border: 4px solid #cfcfcf; }
.gallery-nav { display: flex; flex: 1; flex-direction: column; align-items: center; justify-content: space-around; }
.gallery-nav svg:first-child { color: #bbb; }

/* Work area */
.work { display: flex; flex: 1; min-height: 0; }
.sidebar { display: flex; flex-direction: column; flex: 0 0 321px; border-right: 1px solid #c3c7c8; padding-top: 11px; }
.side-tabs { display: flex; gap: 18px; height: 28px; padding: 0 10px 0 12px; font-size: 14px; }
.side-tabs a { height: 28px; line-height: 26px; border-bottom: 2px solid transparent; }
.side-tabs .on { color: #1e5fd0; border-color: #1e5fd0; }
.side-tabs .plain { margin-left: auto; }
.side-tools { display: flex; gap: 4px; padding: 17px 13px 0 12px; }
.chip { width: 24px; height: 24px; border: 1px solid #c9cccc; border-radius: 4px; background: #fff; }
.smart { width: 103px; margin-left: auto; gap: 5px; }
.tree-wrap { display: flex; flex: 1; min-height: 0; padding-top: 17px; }
.tree { flex: 1; margin: 0; padding: 0 3px 0 28px; list-style: none; overflow: hidden; color: #1a1a1a; }
.tree li { height: 26px; padding: 1px 0; }
.tree a { display: flex; align-items: center; height: 24px; border-radius: 5px; }
.tree span { width: 19px; }
.l1 { padding-left: 10px; }
.l2 { padding-left: 26px; }
.l3 { padding-left: 42px; }
.open::before { content: ""; margin: 0 7px 0 -14px; border: solid transparent; border-width: 6px 4px 0; border-top-color: #777; width: 7px; box-sizing: border-box; }
.current { background: #c9cecd; }
.tree-bar { width: 9px; }
.tree-bar span { display: block; width: 6px; height: 79%; border-radius: 3px; background: #c6cbcb; }

.canvas { display: grid; grid-template-columns: 1fr 872px 1fr 17px; flex: 1; min-width: 0; overflow: hidden; }
.page { grid-column: 2; padding: 20px 114px 0 124px; background: #fff; box-shadow: 0 0 3px rgba(0, 0, 0, .35); color: #000; }
.heading { display: flex; align-items: center; height: 36px; margin: 0 0 30px -64px; color: #999; }
.mark { font: 16px/20px "Noto Sans", sans-serif; }
.mark small { font-size: 10px; }
.grip { width: 10px; height: 14px; margin-left: 5px; fill: #777; stroke: none; }
h2 { margin: 0 0 0 72px; font-size: 20px; line-height: 36px; font-weight: 700; color: #000; font-family: "Liberation Mono", "Noto Sans CJK SC", monospace; }
.page p { margin: 0; font: 300 17px/36px "Noto Sans CJK SC", sans-serif; }
.page .after { margin-top: 29px; }
.ln { display: block; white-space: nowrap; text-align-last: justify; }
.first { padding-left: 35px; }
.last { text-align-last: left; }
sup { font-size: 12px; line-height: 0; }
figure { margin: 0 -1px 0 12px; padding-bottom: 2px; border: 4px solid #fd5565; border-radius: 4px; }
.usecase { width: 100%; height: auto; stroke-width: 1; font-family: "Noto Sans CJK SC", sans-serif; font-size: 14px; }
.person { stroke: #666; stroke-width: 2; }
.links, .nodes { stroke: #111; }
.head { fill: #000; }
.labels { fill: #000; stroke: none; text-anchor: middle; }
.actor { font-size: 17px; }
figcaption { padding-left: 22px; text-align: center; font: 300 17px/34px "Noto Sans CJK SC", sans-serif; }
.page-side { display: flex; flex-direction: column; align-items: flex-start; gap: 9px; padding: 21px 0 0 19px; }
.collapse { width: 24px; height: 24px; border-radius: 3px; background: #f4f4f4; color: #666; box-shadow: 0 0 4px rgba(0, 0, 0, .12); }
.check { height: 32px; width: 100px; justify-content: flex-start; gap: 6px; border-radius: 3px; background: #fff; color: #000; overflow: hidden; box-shadow: 0 1px 4px rgba(0, 0, 0, .2); }
.check span { display: grid; place-items: center; width: 31px; height: 32px; background: #8a8cfa; }
.vbar { display: flex; flex-direction: column; align-items: center; gap: 4px; padding: 6px 0; color: #707070; }
.vbar svg { fill: currentColor; stroke: none; }
.thumb { width: 8px; height: 48px; margin-top: 159px; border-radius: 4px; background: #c6c7c9; }
.vbar .push { margin-top: auto; }
.rail { display: flex; flex-direction: column; align-items: center; flex: 0 0 57px; padding-top: 12px; border-left: 1px solid #c6c6ca; }
.rail button { width: 40px; height: 40px; }
.rail .fold { height: 24px; }
.soft { color: #999; }

/* Status bar */
.status { display: flex; align-items: center; flex: none; height: 24px; padding: 0 11px 0 16px; border-top: 1px solid #c4c8ca; white-space: nowrap; }
.status i { width: 1px; height: 14px; margin: 0 12px; background: #c2c6c8; }
.status .near { margin-left: 20px; }
.status .pad { margin-left: 7px; margin-right: 11px; }
.status .wide { margin-left: 9px; }
.spell { gap: 4px; }
.warn { gap: 6px; margin-left: 4px; }
.views { display: flex; align-items: center; gap: 8px; margin-left: auto; }
.views button { width: 24px; height: 23px; }
.views b { width: 1px; height: 14px; background: #c6c4cc; }
.views .sel { border-radius: 3px; background: #cdcad3; }
.views .zoom { width: 61px; gap: 9px; color: #555; }
.views input { appearance: none; width: 107px; height: 12px; background: none; }
.views input::-webkit-slider-runnable-track { height: 2px; background: linear-gradient(90deg, #1e5fd0 51%, #b0aeb8 51%); }
.views input::-webkit-slider-thumb { appearance: none; width: 10px; height: 10px; margin-top: -4px; border: 3px solid #fff; border-radius: 50%; background: #888; box-shadow: 0 0 2px rgba(0, 0, 0, .4); }

/* Floating input-method bar */
.ime { position: fixed; top: 256px; right: 31px; z-index: 5; display: flex; align-items: center; gap: 4px; height: 26px; padding: 0 2px 0 0; border: 1px solid #a9c8ec; background: #fff; color: #0a6fdc; }
.ime svg { fill: currentColor; stroke: none; }
.ime .i20 { padding: 2px; }
.ime b { width: 20px; font-size: 16px; text-align: center; }
.ime .ime-logo { width: 34px; height: 32px; margin: -4px -1px 0 -14px; }
```
